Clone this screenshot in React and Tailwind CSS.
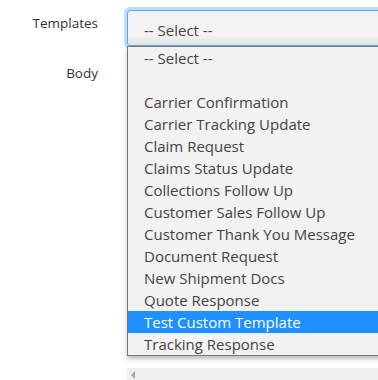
import React from "react";

const items = [
  "-- Select --",
  "",
  "Carrier Confirmation",
  "Carrier Tracking Update",
  "Claim Request",
  "Claims Status Update",
  "Collections Follow Up",
  "Customer Sales Follow Up",
  "Customer Thank You Message",
  "Document Request",
  "New Shipment Docs",
  "Quote Response",
  "Test Custom Template",
  "Tracking Response",
];

export default function App() {
  return (
    <div
      className="relative w-[378px] h-[380px] overflow-hidden bg-white text-[15px] text-[#333]"
      style={{ fontFamily: '"Open Sans", "Noto Sans", sans-serif' }}
    >
      <div className="flex pt-[10px]">
        <div className="w-[98px] shrink-0 text-right leading-[22px] text-[13.5px] pt-[2px]">Templates</div>
        <div className="relative ml-[29px] shrink-0 w-[300px]">
          <div className="h-[36px] w-[300px] rounded-[3px] border border-[#5aa6f5] bg-gradient-to-b from-[#f3f3f3] from-70% to-[#e3e3e3] pl-[16px] pt-[2px] leading-[34px] shadow-[0_0_0_3px_#bcdcfd] text-[#444]">
            -- Select --
          </div>
          <div className="absolute left-0 top-[36px] w-[300px] border border-[#7a7a7a] bg-[#f2f2f2] shadow-[0_3px_4px_rgba(0,0,0,0.25)] z-10">
            {items.map((t, i) => (
              <div
                key={i}
                className={
                  "h-[22px] pl-[16px] leading-[22px] whitespace-nowrap " +
                  (t === "Test Custom Template" ? "bg-[#1e90ff] text-white" : "text-[#444]")
                }
              >
                {t}
              </div>
            ))}
          </div>
        </div>
      </div>
      <div className="flex pt-[16px]">
        <div className="w-[98px] shrink-0 text-right leading-[22px] text-[13.5px]">Body</div>
      </div>
      <div className="absolute left-[127px] top-[368px] w-[260px] h-[14px] bg-[#f0f0f0] flex items-center pl-[4px]">
        <div className="w-0 h-0 border-y-[4px] border-y-transparent border-r-[4px] border-r-[#a3a3a3]" />
      </div>
    </div>
  );
}
